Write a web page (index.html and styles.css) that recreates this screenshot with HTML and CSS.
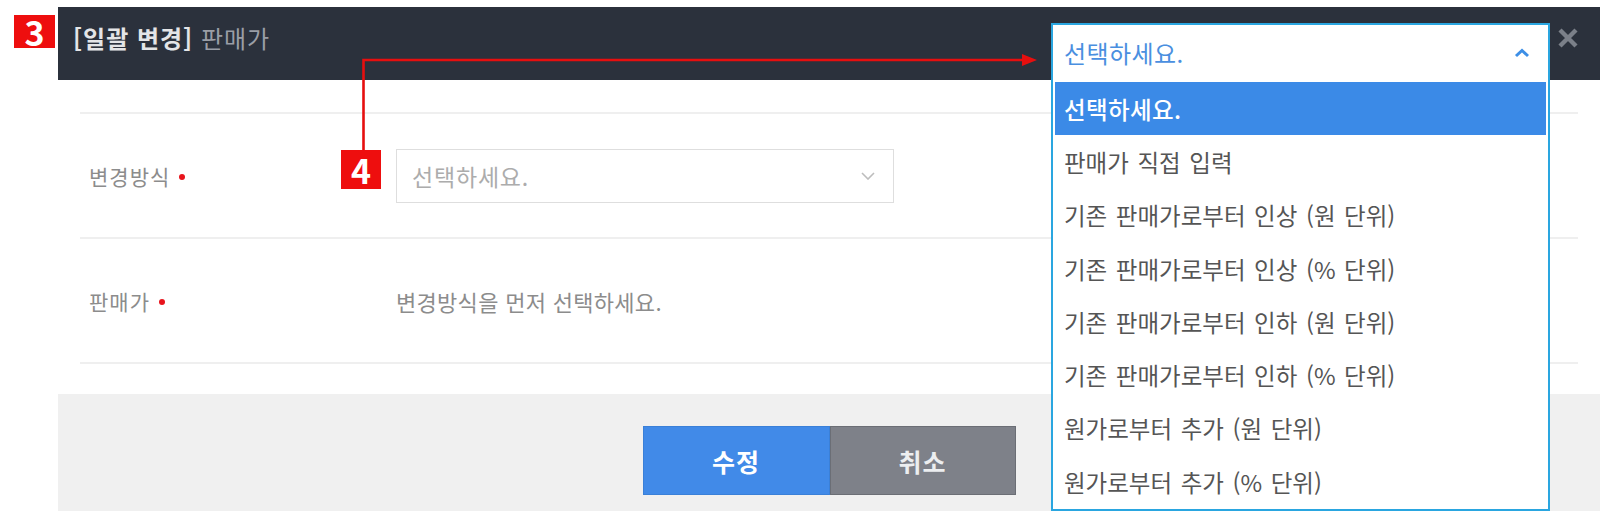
FILE: index.html
```html
<!DOCTYPE html>
<html lang="ko">
<head>
<meta charset="utf-8">
<title>일괄 변경 - 판매가</title>
<link rel="stylesheet" href="styles.css">
</head>
<body>
<div class="page">
  <div class="modal">
    <div class="modal-header">
      <h2 class="title"><strong>[일괄 변경]</strong> 판매가</h2>
      <span class="close" aria-label="닫기">
        <svg width="22" height="22" viewBox="0 0 22 22"><path d="M3 3 L19 19 M19 3 L3 19" stroke="#7b8089" stroke-width="4.4" stroke-linecap="butt" fill="none"/></svg>
      </span>
    </div>
    <div class="modal-body">
      <div class="row">
        <div class="label">변경방식<span class="req"></span></div>
        <div class="value">
          <div class="select">
            <span class="placeholder">선택하세요.</span>
            <svg width="14" height="8" viewBox="0 0 14 8"><path d="M1 1 L7 7 L13 1" stroke="#bdbdbd" stroke-width="1.6" fill="none"/></svg>
          </div>
        </div>
      </div>
      <div class="row">
        <div class="label">판매가<span class="req"></span></div>
        <div class="value muted">변경방식을 먼저 선택하세요.</div>
      </div>
    </div>
    <div class="modal-footer">
      <button class="btn btn-primary">수정</button><button class="btn btn-secondary">취소</button>
    </div>
  </div>

  <div class="dropdown">
    <div class="dropdown-top">
      <span>선택하세요.</span>
      <svg width="16" height="10" viewBox="0 0 16 10"><path d="M2 8 L8 2.5 L14 8" stroke="#3d8fe6" stroke-width="3" fill="none"/></svg>
    </div>
    <ul class="options">
      <li class="active">선택하세요.</li>
      <li>판매가 직접 입력</li>
      <li>기존 판매가로부터 인상 (원 단위)</li>
      <li>기존 판매가로부터 인상 (% 단위)</li>
      <li>기존 판매가로부터 인하 (원 단위)</li>
      <li>기존 판매가로부터 인하 (% 단위)</li>
      <li>원가로부터 추가 (원 단위)</li>
      <li>원가로부터 추가 (% 단위)</li>
    </ul>
  </div>

  <svg class="arrow" width="1600" height="511" viewBox="0 0 1600 511">
    <path d="M363.5 151 V60 H1024" stroke="#e60f0f" stroke-width="2.6" fill="none"/>
    <polygon points="1022,54 1037,60 1022,66" fill="#e60f0f"/>
  </svg>
  <div class="badge badge-3">3</div>
  <div class="badge badge-4">4</div>
</div>
</body>
</html>
```

FILE: styles.css
```css
* { box-sizing: border-box; }

html, body {
  margin: 0;
  padding: 0;
  background: #ffffff;
}

body {
  font-family: "Noto Sans CJK KR", "Malgun Gothic", "Noto Sans", sans-serif;
  color: #555;
}

.page {
  position: relative;
  width: 1600px;
  height: 511px;
  overflow: hidden;
  padding: 7px 0 0 58px;
}

.modal {
  width: 1542px;
  background: #fff;
}

.modal-header {
  height: 73px;
  background: #2b313c;
  display: flex;
  justify-content: space-between;
  align-items: flex-start;
  padding: 15px 21px 0 15px;
}

.title {
  margin: 0;
  font-size: 24px;
  line-height: 32px;
  font-weight: 400;
  color: #9a9ea6;
  letter-spacing: 1px;
}

.title strong {
  color: #e4e5e7;
  font-weight: 700;
}

.close {
  display: flex;
  width: 22px;
  height: 22px;
  margin-top: 5px;
}

.modal-body {
  padding: 32px 22px 30px 22px;
}

.row {
  display: flex;
  align-items: center;
  height: 125px;
  border-top: 2px solid #efefef;
}

.row:last-child {
  height: 127px;
  border-bottom: 2px solid #efefef;
}

.label {
  flex: 0 0 316px;
  padding-left: 9px;
  font-size: 21px;
  letter-spacing: 1px;
  color: #8c8c8c;
  display: flex;
  align-items: center;
}

.req {
  display: inline-block;
  width: 6px;
  height: 6px;
  border-radius: 50%;
  background: #e8141c;
  margin-left: 9px;
  margin-top: 3px;
}

.value {
  font-size: 22px;
  letter-spacing: 0.3px;
}

.value.muted {
  color: #8c8c8c;
}

.select {
  width: 498px;
  height: 54px;
  border: 1px solid #dedede;
  display: flex;
  align-items: center;
  justify-content: space-between;
  padding: 0 18px 0 15px;
}

.placeholder {
  font-size: 23px;
  letter-spacing: 0.8px;
  color: #acacac;
}

.modal-footer {
  height: 117px;
  background: #f0f0f0;
  display: flex;
  justify-content: center;
  align-items: flex-start;
  padding-top: 32px;
}

.btn {
  width: 187px;
  height: 69px;
  font-family: inherit;
  font-size: 25px;
  letter-spacing: 1px;
  font-weight: 700;
  border: 1px solid;
  margin: 0;
  padding: 0;
}

.btn-primary {
  background: #418ae8;
  border-color: #3a80d8;
  color: #ffffff;
}

.btn-secondary {
  width: 186px;
  background: #7e8189;
  border-color: #6b6e75;
  color: #eceef0;
}

/* open select dropdown overlay */
.dropdown {
  position: absolute;
  left: 1051px;
  top: 23px;
  width: 499px;
  height: 488px;
  border: 2px solid #2aa6e0;
  background: #fff;
  overflow: hidden;
}

.dropdown-top {
  height: 55px;
  display: flex;
  align-items: center;
  justify-content: space-between;
  padding: 0 18px 0 11px;
  font-size: 24px;
  letter-spacing: 0.4px;
  color: #4a8fe0;
}

.options {
  list-style: none;
  margin: 0;
  padding: 2px 2px 0 2px;
}

.options li {
  height: 53.3px;
  display: flex;
  align-items: center;
  padding-left: 9px;
  font-size: 23.5px;
  letter-spacing: 0;
  word-spacing: 2px;
  color: #555;
}

.options li.active {
  background: #3b8ae7;
  color: #ffffff;
  font-weight: 500;
  letter-spacing: 0.4px;
}

/* annotations */
.arrow {
  position: absolute;
  left: 0;
  top: 0;
  pointer-events: none;
}

.badge {
  position: absolute;
  background: #ee0e0e;
  color: #fff;
  font-family: "Noto Sans CJK KR", "Liberation Sans", sans-serif;
  font-weight: 700;
  font-size: 34px;
  line-height: 1;
  display: flex;
  align-items: center;
  justify-content: center;
}

.badge-3 {
  left: 14px;
  top: 15px;
  width: 41px;
  height: 33px;
}

.badge-4 {
  left: 341px;
  top: 150px;
  width: 40px;
  height: 39px;
}
```
